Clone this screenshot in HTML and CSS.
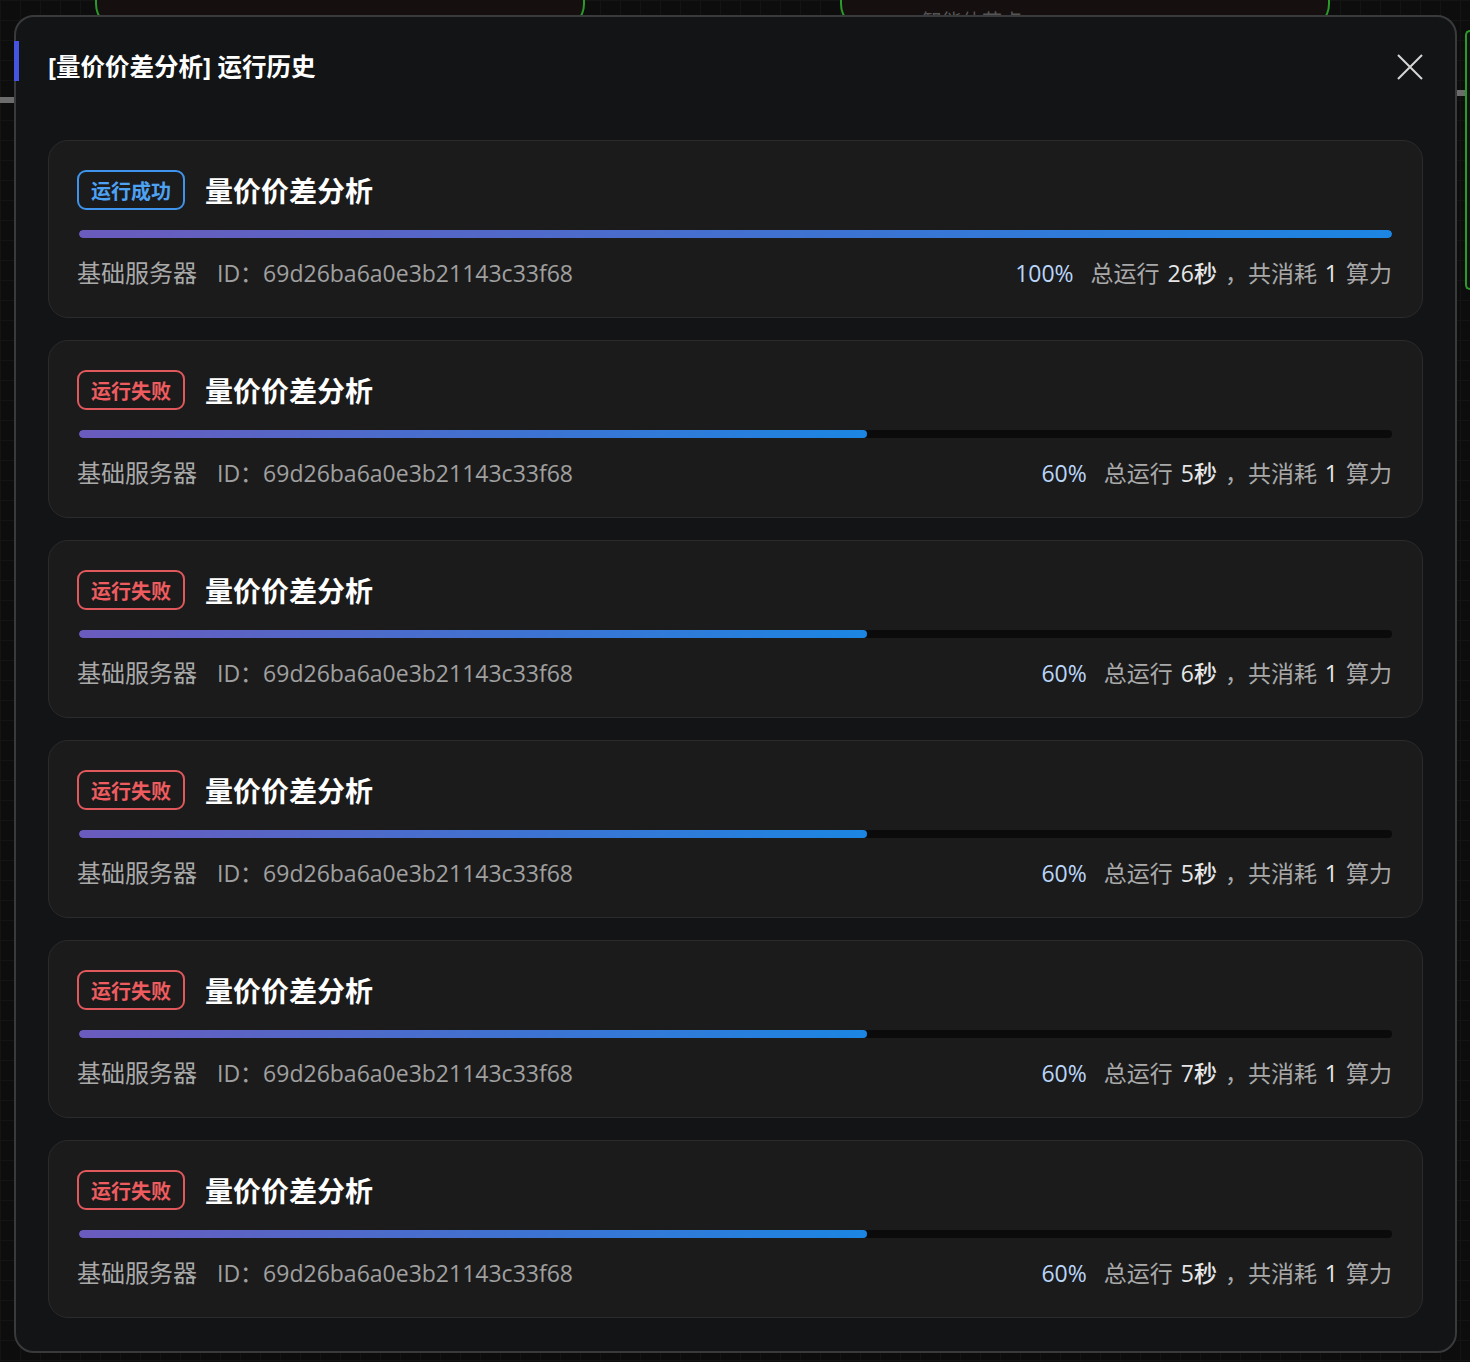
FILE: index.html
```html
<!DOCTYPE html>
<html lang="zh-CN">
<head>
    <meta charset="UTF-8">
    <meta name="viewport" content="width=device-width, initial-scale=1.0">
    <title>运行历史</title>
    <link rel="stylesheet" href="styles.css">
</head>
<body>
    <!-- холст с нодами за модалкой -->
    <div class="canvas">
        <div class="node node--a"></div>
        <div class="node node--b"><span>智能体节点</span></div>
        <div class="node node--c"></div>
        <div class="edge edge--left"></div>
        <div class="edge edge--right"></div>
    </div>

    <div class="modal">
        <div class="modal__head">
            <h2 class="modal__title">[量价价差分析] 运行历史</h2>
            <button class="modal__close" aria-label="关闭">
                <svg width="26" height="26" viewBox="0 0 26 26">
                    <path d="M1 1 L25 25 M25 1 L1 25" stroke="#d6d6d6" stroke-width="2" fill="none"/>
                </svg>
            </button>
        </div>

        <div class="runs">
            <div class="run">
                <div class="run__top">
                    <span class="badge badge--ok">运行成功</span>
                    <span class="run__name">量价价差分析</span>
                </div>
                <div class="bar"><div class="bar__fill" style="width: 100%"></div></div>
                <div class="run__info">
                    <div><span class="info__srv">基础服务器</span><span class="info__id">ID：69d26ba6a0e3b21143c33f68</span></div>
                    <div><span class="info__pct">100%</span><span>总运行 </span><b>26秒</b><span> ，共消耗 </span><b>1</b><span> 算力</span></div>
                </div>
            </div>

            <div class="run">
                <div class="run__top">
                    <span class="badge badge--fail">运行失败</span>
                    <span class="run__name">量价价差分析</span>
                </div>
                <div class="bar"><div class="bar__fill" style="width: 60%"></div></div>
                <div class="run__info">
                    <div><span class="info__srv">基础服务器</span><span class="info__id">ID：69d26ba6a0e3b21143c33f68</span></div>
                    <div><span class="info__pct">60%</span><span>总运行 </span><b>5秒</b><span> ，共消耗 </span><b>1</b><span> 算力</span></div>
                </div>
            </div>

            <div class="run">
                <div class="run__top">
                    <span class="badge badge--fail">运行失败</span>
                    <span class="run__name">量价价差分析</span>
                </div>
                <div class="bar"><div class="bar__fill" style="width: 60%"></div></div>
                <div class="run__info">
                    <div><span class="info__srv">基础服务器</span><span class="info__id">ID：69d26ba6a0e3b21143c33f68</span></div>
                    <div><span class="info__pct">60%</span><span>总运行 </span><b>6秒</b><span> ，共消耗 </span><b>1</b><span> 算力</span></div>
                </div>
            </div>

            <div class="run">
                <div class="run__top">
                    <span class="badge badge--fail">运行失败</span>
                    <span class="run__name">量价价差分析</span>
                </div>
                <div class="bar"><div class="bar__fill" style="width: 60%"></div></div>
                <div class="run__info">
                    <div><span class="info__srv">基础服务器</span><span class="info__id">ID：69d26ba6a0e3b21143c33f68</span></div>
                    <div><span class="info__pct">60%</span><span>总运行 </span><b>5秒</b><span> ，共消耗 </span><b>1</b><span> 算力</span></div>
                </div>
            </div>

            <div class="run">
                <div class="run__top">
                    <span class="badge badge--fail">运行失败</span>
                    <span class="run__name">量价价差分析</span>
                </div>
                <div class="bar"><div class="bar__fill" style="width: 60%"></div></div>
                <div class="run__info">
                    <div><span class="info__srv">基础服务器</span><span class="info__id">ID：69d26ba6a0e3b21143c33f68</span></div>
                    <div><span class="info__pct">60%</span><span>总运行 </span><b>7秒</b><span> ，共消耗 </span><b>1</b><span> 算力</span></div>
                </div>
            </div>

            <div class="run">
                <div class="run__top">
                    <span class="badge badge--fail">运行失败</span>
                    <span class="run__name">量价价差分析</span>
                </div>
                <div class="bar"><div class="bar__fill" style="width: 60%"></div></div>
                <div class="run__info">
                    <div><span class="info__srv">基础服务器</span><span class="info__id">ID：69d26ba6a0e3b21143c33f68</span></div>
                    <div><span class="info__pct">60%</span><span>总运行 </span><b>5秒</b><span> ，共消耗 </span><b>1</b><span> 算力</span></div>
                </div>
            </div>
        </div>
    </div>
</body>
</html>
```

FILE: styles.css
```css
* {
    margin: 0px;
    box-sizing: border-box;
}

body {
    width: 1470px;
    height: 1362px;
    overflow: hidden;
    position: relative;
    background-color: #0d0d0d;
    font-family: "Open Sans", "Noto Sans CJK SC", sans-serif;
}

/* фон-холст */
.canvas {
    position: absolute;
    inset: 0;
    overflow: hidden;
    background-image:
        linear-gradient(#141414 1px, transparent 1px),
        linear-gradient(90deg, #141414 1px, transparent 1px);
    background-size: 20px 20px;
}
.node {
    position: absolute;
    top: 0;
    border: 2px solid #2a9a2a;
    border-top: none;
    border-radius: 0 0 26px 26px;
    background-color: #150f0f;
}
.node--a {
    left: 95px;
    width: 490px;
    height: 30px;
}
.node--b {
    left: 840px;
    width: 490px;
    height: 30px;
}
.node--b span {
    position: absolute;
    left: 80px;
    top: 6px;
    color: #555;
    font-size: 20px;
}
.node--c {
    left: 1465px;
    top: 30px;
    width: 5px;
    height: 260px;
    border-right: none;
    border-top: 2px solid #2a9a2a;
    border-radius: 26px 0 0 26px;
    background-color: #101410;
}
.edge {
    position: absolute;
    height: 6px;
    background-color: #6c6c6c;
}
.edge--left {
    left: 0;
    top: 97px;
    width: 20px;
}
.edge--right {
    left: 1450px;
    top: 90px;
    width: 15px;
}

/* модалка */
.modal {
    position: absolute;
    left: 14px;
    top: 15px;
    width: 1443px;
    height: 1338px;
    background-color: #121416;
    border: 2px solid #393a3b;
    border-radius: 20px;
    padding: 34px 32px 32px;
}
.modal::before {
    content: "";
    position: absolute;
    left: -2px;
    top: 24px;
    width: 5px;
    height: 40px;
    background-color: #4654e2;
}
.modal__head {
    display: flex;
    justify-content: space-between;
    align-items: center;
    height: 32px;
    margin-bottom: 57px;
}
.modal__title {
    color: #ffffff;
    font-size: 24.5px;
    line-height: 32px;
    font-weight: 700;
}
.modal__close {
    background: none;
    border: none;
    padding: 0;
    width: 26px;
    height: 26px;
    cursor: pointer;
}

.runs {
    display: flex;
    flex-direction: column;
    gap: 22px;
}
.run {
    background-color: #1b1b1c;
    border: 1px solid #2b2b2c;
    border-radius: 20px;
    padding: 29px 30px 28px 28px;
}
.run__top {
    display: flex;
    align-items: center;
    gap: 20px;
    height: 40px;
}
.badge {
    display: flex;
    align-items: center;
    height: 40px;
    padding: 0 12px;
    border: 2px solid;
    border-radius: 9px;
    font-family: "Noto Sans CJK SC", sans-serif;
    font-size: 20px;
    font-weight: 700;
}
.badge--ok {
    color: #4ea2f4;
    border-color: #3f93ea;
}
.badge--fail {
    color: #ee5c5f;
    border-color: #e0585b;
}
.run__name {
    color: #ffffff;
    font-family: "Noto Sans CJK SC", sans-serif;
    font-size: 28px;
    font-weight: 700;
}

.bar {
    height: 8px;
    margin: 20px 0 19px 2px;
    border-radius: 4px;
    background-color: #0b0b0c;
    overflow: hidden;
}
.bar__fill {
    height: 100%;
    border-radius: 4px;
    background: linear-gradient(90deg, #6a5bbd, #1c85e2);
}

.run__info {
    display: flex;
    justify-content: space-between;
    font-size: 23px;
    line-height: 32px;
    color: #a9a9a9;
}
.info__srv {
    font-size: 24px;
    margin-right: 20px;
}
.info__id {
    color: #a0a0a0;
}
.info__pct {
    color: #b9d5f8;
    margin-right: 17px;
}
.run__info b {
    color: #e6e6e6;
    font-weight: 500;
    margin: 0 2px;
}
```
